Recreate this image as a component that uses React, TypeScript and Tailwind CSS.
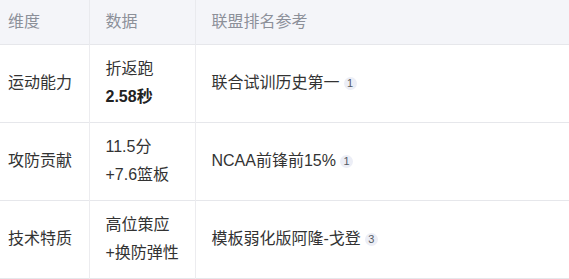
const rows = [
  { dim: "运动能力", data: ["折返跑", "2.58秒"], bold: true, ref: "联合试训历史第一", n: 1 },
  { dim: "攻防贡献", data: ["11.5分", "+7.6篮板"], bold: false, ref: "NCAA前锋前15%", n: 1 },
  { dim: "技术特质", data: ["高位策应", "+换防弹性"], bold: false, ref: "模板弱化版阿隆-戈登", n: 3 },
];

function Badge({ n }: { n: number }) {
  return (
    <span className="ml-1 inline-flex h-[13px] w-[13px] items-center justify-center rounded-full bg-[#eceef6] text-[11px] leading-none text-[#555a63]">
      {n}
    </span>
  );
}

export default function App() {
  return (
    <div
      className="w-[569px] h-[279px] overflow-hidden bg-white"
      style={{ fontFamily: '"Liberation Sans", "Noto Sans CJK SC", sans-serif' }}
    >
      <table className="w-[600px] border-collapse text-[16px] text-[#333]">
        <thead>
          <tr className="h-[44px] bg-[#f4f5f9] border-b border-[#e6e7eb] text-[#8c9099]">
            <th className="w-[89px] pl-2 text-left font-normal border-r border-[#e9eaee]">维度</th>
            <th className="w-[106px] pl-4 text-left font-normal border-r border-[#e9eaee]">数据</th>
            <th className="pl-4 text-left font-normal">联盟排名参考</th>
          </tr>
        </thead>
        <tbody>
          {rows.map((r) => (
            <tr key={r.dim} className="h-[78px] border-b border-[#e6e7eb]">
              <td className="pl-2 border-r border-[#ececef]">{r.dim}</td>
              <td className="pl-4 border-r border-[#ececef] leading-[28px]">
                <div>{r.data[0]}</div>
                <div className={r.bold ? "font-bold text-[#222]" : ""}>{r.data[1]}</div>
              </td>
              <td className="pl-4">
                <span className="inline-flex items-center">
                  {r.ref}
                  <Badge n={r.n} />
                </span>
              </td>
            </tr>
          ))}
        </tbody>
      </table>
    </div>
  );
}
